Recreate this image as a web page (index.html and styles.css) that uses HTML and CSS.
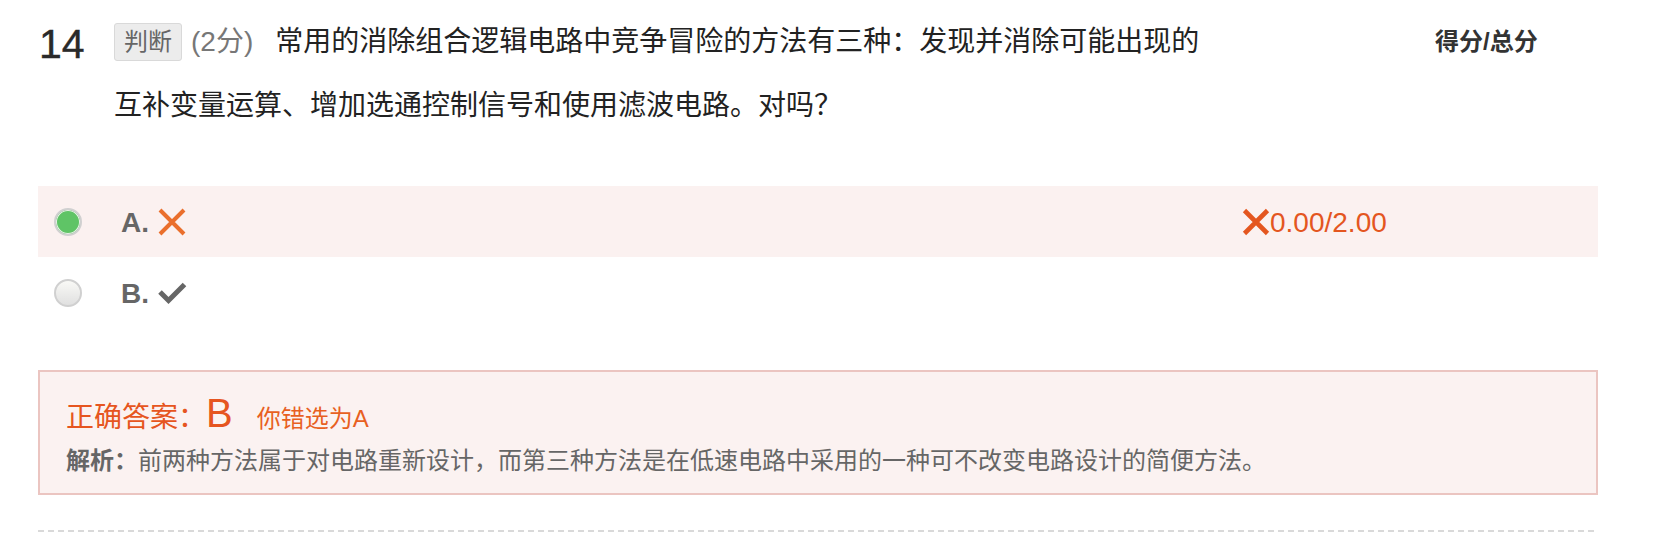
FILE: index.html
```html
<!DOCTYPE html>
<html lang="zh-CN">
<head>
<meta charset="utf-8">
<title>判断题 14</title>
<link rel="stylesheet" href="styles.css">
</head>
<body>
<div class="page">
  <div class="q-head">
    <div class="q-num">14</div>
    <div class="q-body"><span class="q-type">判断</span><span class="q-pts">(2分)</span><span class="q-text">常用的消除组合逻辑电路中竞争冒险的方法有三种：发现并消除可能出现的互补变量运算、增加选通控制信号和使用滤波电路。对吗？</span></div>
    <div class="q-score-h">得分/总分</div>
  </div>

  <div class="options">
    <div class="opt opt-wrong">
      <span class="radio radio-on"></span>
      <span class="opt-label">A.</span>
      <svg class="opt-icon" width="30" height="30" viewBox="0 0 30 30"><path d="M3 3 L27 27 M27 3 L3 27" stroke="#ea6f2c" stroke-width="4" fill="none"/></svg>
      <div class="opt-score">
        <svg class="score-x" width="28" height="28" viewBox="0 0 28 28"><path d="M2.5 2.5 L25.5 25.5 M25.5 2.5 L2.5 25.5" stroke="#e4561f" stroke-width="4.6" fill="none"/></svg>
        <span class="score-num">0.00/2.00</span>
      </div>
    </div>
    <div class="opt">
      <span class="radio"></span>
      <span class="opt-label">B.</span>
      <svg class="opt-icon" width="30" height="24" viewBox="0 0 30 24"><path d="M3 11 L11.5 19.5 L27.5 3.5" stroke="#666" stroke-width="5" fill="none"/></svg>
    </div>
  </div>

  <div class="answer">
    <div class="ans-line"><span class="ans-title">正确答案：</span><span class="ans-key">B</span><span class="ans-mine">你错选为A</span></div>
    <div class="ans-expl"><span class="expl-title">解析：</span>前两种方法属于对电路重新设计，而第三种方法是在低速电路中采用的一种可不改变电路设计的简便方法。</div>
  </div>

  <div class="divider"></div>
</div>
</body>
</html>
```

FILE: styles.css
```css
html, body {
  margin: 0;
  padding: 0;
  background: #fff;
}

body {
  font-family: "Liberation Sans", "Noto Sans CJK SC", sans-serif;
  color: #222;
}

.page {
  width: 1560px;
  margin-left: 38px;
  padding-top: 10px;
}

/* ---------- question header ---------- */
.q-head {
  display: flex;
  align-items: flex-start;
}

.q-num {
  width: 76px;
  flex: none;
  font-size: 41px;
  line-height: 41px;
  margin-top: 14px;
  color: #2a2a2a;
  padding-left: 1px;
  box-sizing: border-box;
  -webkit-text-stroke: 0.4px #2a2a2a;
}

.q-body {
  width: 1100px;
  flex: none;
  font-size: 28px;
  line-height: 64px;
  color: #222;
}

.q-type {
  display: inline-block;
  vertical-align: top;
  margin-top: 13px;
  height: 38px;
  line-height: 36px;
  font-size: 24px;
  color: #666;
  background: #ececec;
  border: 1px solid #d9d9d9;
  border-radius: 3px;
  box-sizing: border-box;
  width: 68px;
  text-align: center;
  overflow: hidden;
}

.q-pts {
  color: #777;
  margin-left: 9px;
  margin-right: 22px;
}

.q-score-h {
  margin-left: 221px;
  font-size: 24px;
  line-height: 64px;
  font-weight: bold;
  color: #333;
  white-space: nowrap;
}

/* ---------- options ---------- */
.options {
  margin-top: 48px;
}

.opt {
  display: flex;
  align-items: center;
  height: 71px;
  padding-left: 16px;
}

.opt-wrong {
  background: #fbf1f0;
}

.radio {
  width: 28px;
  height: 28px;
  border-radius: 50%;
  box-sizing: border-box;
  border: 2px solid #d0d0d0;
  background: linear-gradient(#f9f9f6, #e0e0e0);
  flex: none;
}

.radio-on {
  background: #5fc466;
  box-shadow: inset 0 0 0 1px #e9f3e8;
}

.opt-label {
  margin-left: 39px;
  font-size: 28px;
  font-weight: bold;
  color: #666;
  line-height: 1;
  padding-top: 2px;
}

.opt-icon {
  margin-left: 8px;
  display: block;
  flex: none;
}

.opt-score {
  margin-left: auto;
  width: 355px;
  display: flex;
  align-items: center;
  color: #e4561f;
}

.score-x {
  display: block;
  flex: none;
  margin-left: -1px;
  margin-top: 1px;
}

.score-num {
  font-size: 28px;
  line-height: 1;
  margin-left: 0;
  padding-top: 3px;
}

/* ---------- answer box ---------- */
.answer {
  margin-top: 42px;
  border: 2px solid #ebc5c1;
  background: #fbf2f1;
  padding: 21px 26px 12px;
}

.ans-line {
  font-size: 28px;
  line-height: 46px;
  color: #e65520;
  white-space: nowrap;
}

.ans-title {
  line-height: 1;
}

.ans-key {
  font-size: 40px;
  line-height: 1;
}

.ans-mine {
  font-size: 24px;
  line-height: 1;
  margin-left: 24px;
  color: #e8601f;
}

.ans-expl {
  font-size: 24px;
  line-height: 40px;
  color: #666;
  white-space: nowrap;
}

.expl-title {
  font-weight: bold;
}

/* ---------- divider ---------- */
.divider {
  margin-top: 35px;
  height: 2px;
  background: repeating-linear-gradient(to right, #d9d9d9 0 6px, transparent 6px 10px);
}
```
